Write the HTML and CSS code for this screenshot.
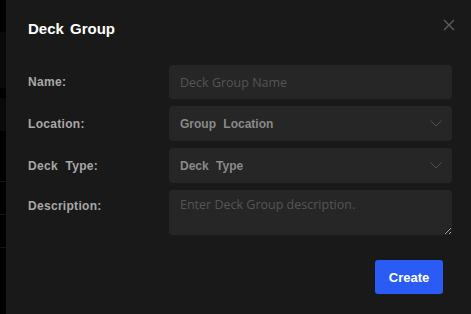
FILE: index.html
```html
<!DOCTYPE html>
<html lang="en">
<head>
<meta charset="utf-8">
<title>Deck Group</title>
<link rel="stylesheet" href="styles.css">
</head>
<body>
<div class="page">
  <div class="backdrop">
    <div class="bd bd-a h32"></div>
    <div class="bd bd-b h56"></div>
    <div class="bd bd-a h10"></div>
    <div class="bd bd-b h33"></div>
    <div class="bd bd-a h50"></div>
    <div class="bd bd-a h33 line"></div>
    <div class="bd bd-a h33 line"></div>
    <div class="bd bd-a h67 line"></div>
  </div>
  <div class="modal">
    <div class="modal-head">
      <h2 class="title">Deck Group</h2>
      <button class="close" aria-label="Close">
        <svg width="12" height="12" viewBox="0 0 12 12"><path d="M1 1 L11 11 M11 1 L1 11" stroke="#5f5f5f" stroke-width="1.3" fill="none"/></svg>
      </button>
    </div>
    <form class="form">
      <label class="label">Name:</label>
      <input class="field input" placeholder="Deck Group Name">
      <label class="label">Location:</label>
      <div class="field select"><span>Group Location</span>
        <svg class="chev" width="12" height="7" viewBox="0 0 12 7"><path d="M0.5 0.5 L6 6 L11.5 0.5" stroke="#505050" stroke-width="1" fill="none"/></svg>
      </div>
      <label class="label">Deck Type:</label>
      <div class="field select"><span>Deck Type</span>
        <svg class="chev" width="12" height="7" viewBox="0 0 12 7"><path d="M0.5 0.5 L6 6 L11.5 0.5" stroke="#505050" stroke-width="1" fill="none"/></svg>
      </div>
      <label class="label label-top">Description:</label>
      <textarea class="field textarea" placeholder="Enter Deck Group description."></textarea>
    </form>
    <div class="actions">
      <button class="btn-primary" type="button">Create</button>
    </div>
  </div>
</div>
</body>
</html>
```

FILE: styles.css
```css
* { box-sizing: border-box; }
html, body { margin: 0; padding: 0; background: #000; }
body { width: 471px; height: 314px; overflow: hidden; font-family: "Liberation Sans", Arial, sans-serif; }
.page { display: flex; height: 314px; }
.backdrop { width: 6px; display: flex; flex-direction: column; }
.bd-a { background: #000; }
.bd-b { background: #090909; }
.line { border-top: 1px solid #141414; }
.h32 { height: 32px; }
.h56 { height: 56px; }
.h10 { height: 10px; }
.h33 { height: 33px; }
.h50 { height: 50px; }
.h67 { height: 67px; }
.modal { flex: 1; background: #191919; padding: 20px 19px 0 22px; display: flex; flex-direction: column; }
.modal-head { display: flex; justify-content: space-between; align-items: flex-start; height: 45px; }
.title { margin: 1px 0 0; color: #fff; font-size: 15px; font-weight: bold; word-spacing: 2px; line-height: 16px; }
.close { background: none; border: 0; padding: 0; margin: -1px -3px 0 0; width: 12px; height: 12px; display: block; }
.close svg { display: block; }
.form { display: grid; grid-template-columns: 141px 1fr; row-gap: 7px; }
.label { color: #a8a8a8; font-size: 12px; font-weight: bold; letter-spacing: 0.3px; word-spacing: 4px; align-self: center; }
.label-top { align-self: start; padding-top: 9px; }
.field { background: #262626; border: 0; border-radius: 4px; height: 34px; width: 100%; padding: 0 11px; outline: none; }
.input { font-family: "Open Sans", sans-serif; font-size: 12.5px; color: #ddd; }
.input::placeholder, .textarea::placeholder { color: #555; }
.select { display: flex; align-items: center; justify-content: space-between; color: #8a8a8a; font-size: 12px; font-weight: bold; word-spacing: 4px; padding-right: 10px; height: 35px; }
.chev { display: block; }
.textarea { height: 45px; resize: vertical; padding: 6px 11px; font-family: "Open Sans", sans-serif; font-size: 12.5px; color: #ddd; color-scheme: dark; display: block; }
.actions { display: flex; justify-content: flex-end; margin-top: 25px; margin-right: 9px; }
.btn-primary { background: #2a5cf5; color: #fff; border: 0; border-radius: 3px; width: 68px; height: 34px; font-family: "Liberation Sans", Arial, sans-serif; font-size: 13px; font-weight: bold; padding: 0; }
```
